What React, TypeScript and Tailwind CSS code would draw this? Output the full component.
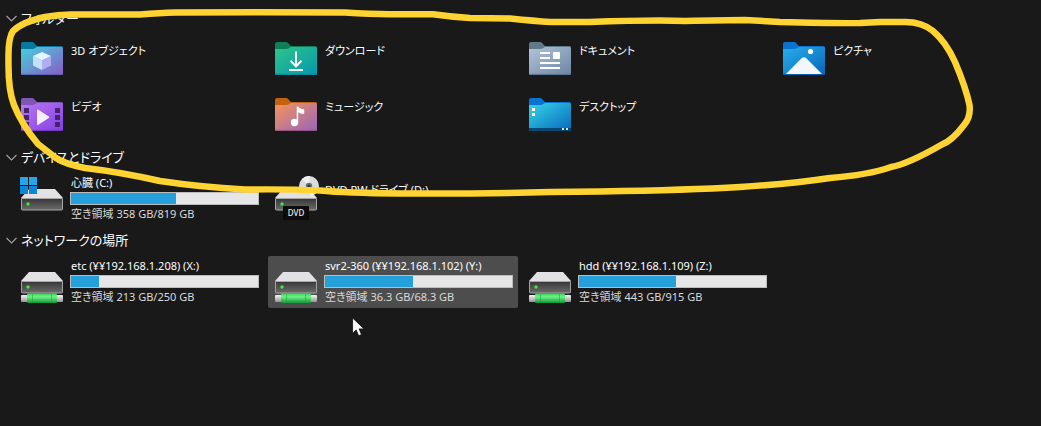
import { useState } from 'react';
import type { ReactNode } from 'react';

type FolderColors = { tab: string; edge: string; from: string; to: string };

function FolderIcon({ id, colors, children }: { id: string; colors: FolderColors; children?: ReactNode }) {
  return (
    <svg width="48" height="48" viewBox="0 0 48 48" aria-hidden="true" className="shrink-0">
      <defs>
        <linearGradient id={id} x1="0" y1="0" x2="1" y2="1">
          <stop offset="0" stopColor={colors.from} />
          <stop offset="1" stopColor={colors.to} />
        </linearGradient>
      </defs>
      <path d="M3 8a2 2 0 0 1 2-2h8.500c1.300 0 2.200.5 3 1.400L19 10h24.500a1.500 1.500 0 0 1 1.500 1.500V20H3z" fill={colors.tab} />
      <path d="M3 13h11.500c1.500 0 2.500-.5 3.500-1.400l.8-.6H43.500a1.500 1.500 0 0 1 1.500 1.500v25a1.500 1.500 0 0 1-1.500 1.500h-39A1.500 1.500 0 0 1 3 37.500z" fill={`url(#${id})`} />
      <path d="M3.500 38.300h41" stroke={colors.edge} strokeWidth="1" />
      {children}
    </svg>
  );
}

function ObjectsIcon() {
  return (
    <FolderIcon id="objects" colors={{ tab: '#0878a0', edge: '#5a63b0', from: '#43d2dc', to: '#8a5bc6' }}>
      <path d="M24 16l9 4-9 4.500-9-4.500z" fill="#e3f5ff" />
      <path d="M15 20l9 4.500V34l-9-4.500z" fill="#c3e2fa" />
      <path d="M33 20l-9 4.500V34l9-4.500z" fill="#b0aef0" />
    </FolderIcon>
  );
}

function DownloadsIcon() {
  return (
    <FolderIcon id="downloads" colors={{ tab: '#0c7f5a', edge: '#07859a', from: '#2fc48a', to: '#0598ad' }}>
      <path d="M24 15.500V30M18.500 24.800L24 30.300l5.500-5.500M17 34h14" fill="none" stroke="#fff" strokeWidth="2" />
    </FolderIcon>
  );
}

function DocumentsIcon() {
  return (
    <FolderIcon id="documents" colors={{ tab: '#5f7a87', edge: '#58718c', from: '#b4c4d9', to: '#6a86a4' }}>
      <path d="M14 17h10M14 22h10M14 27h20M14 32h20" stroke="#fff" strokeWidth="2" />
      <rect x="27" y="16" width="7" height="7" rx="1" fill="#fff" />
    </FolderIcon>
  );
}

function PicturesIcon() {
  return (
    <FolderIcon id="pictures" colors={{ tab: '#0873d0', edge: '#0757a4', from: '#27b0ea', to: '#0a63bb' }}>
      <circle cx="30.500" cy="15.500" r="2.600" fill="#fff" />
      <path d="M6 38l15.300-15.600c1.600-1.600 3.600-1.600 5.200 0L42 38z" fill="#f1f7fd" />
    </FolderIcon>
  );
}

function VideosIcon() {
  return (
    <FolderIcon id="videos" colors={{ tab: '#7e56b5', edge: '#7434bd', from: '#bb77f2', to: '#8341e2' }}>
      <g fill="#44246f">
        <rect x="6" y="16" width="5" height="5" />
        <rect x="6" y="23" width="5" height="5" />
        <rect x="6" y="30" width="5" height="5" />
        <rect x="37" y="16" width="5" height="5" />
        <rect x="37" y="23" width="5" height="5" />
        <rect x="37" y="30" width="5" height="5" />
      </g>
      <path d="M19 18.500c0-.8.700-1.100 1.300-.7l10.500 6.800c.6.400.6 1 0 1.400l-10.500 6.800c-.6.400-1.300.1-1.300-.7z" fill="#f6f0fc" />
    </FolderIcon>
  );
}

function MusicIcon() {
  return (
    <FolderIcon id="music" colors={{ tab: '#c4610f', edge: '#94517f', from: '#f6945a', to: '#9865bb' }}>
      <circle cx="22.500" cy="30.500" r="3.700" fill="#fff" />
      <path d="M24.700 14.500h1.500c.8 2 3.200 2.300 6 3V22c-2.800-.2-4.800-.7-6-2v11h-1.500z" fill="#fff" />
    </FolderIcon>
  );
}

function DesktopIcon() {
  return (
    <FolderIcon id="desktop" colors={{ tab: '#0873d0', edge: '#075797', from: '#36d5e6', to: '#0868bd' }}>
      <path d="M6 16h3v3H6zM6 21h3v3H6z" fill="#fff" />
      <path d="M3 36h42v1.500a1.500 1.500 0 0 1-1.500 1.500h-39A1.500 1.500 0 0 1 3 37.500z" fill="#074774" />
      <path d="M36 36h2v2h-2zM40 36h2v2h-2z" fill="#d4e5f0" />
    </FolderIcon>
  );
}

function DriveIcon({ id, children }: { id: string; children?: ReactNode }) {
  return (
    <svg width="48" height="48" viewBox="0 0 48 48" aria-hidden="true" className="shrink-0">
      <defs>
        <linearGradient id={`${id}-front`} x1="0" y1="0" x2="0" y2="1">
          <stop offset="0" stopColor="#373737" />
          <stop offset="1" stopColor="#6b6b6b" />
        </linearGradient>
        <linearGradient id={`${id}-green`} x1="0" y1="0" x2="0" y2="1">
          <stop offset="0" stopColor="#3fd35b" />
          <stop offset="0.350" stopColor="#6df283" />
          <stop offset="1" stopColor="#14953a" />
        </linearGradient>
        <linearGradient id={`${id}-pipe`} x1="0" y1="0" x2="0" y2="1">
          <stop offset="0" stopColor="#f5f5f5" />
          <stop offset="1" stopColor="#949494" />
        </linearGradient>
      </defs>
      <path d="M11 14h26l8 9H3z" fill="#e2e2e5" />
      <path d="M3.500 23.500h41V34a1 1 0 0 1-1 1h-39a1 1 0 0 1-1-1z" fill={`url(#${id}-front)`} stroke="#a5a5a5" />
      <circle cx="10" cy="29" r="1.700" fill="#3ee83e" />
      {children}
    </svg>
  );
}

function SystemDriveIcon() {
  return (
    <DriveIcon id="system">
      <path d="M2 2h8v8H2zM11 2h8v8h-8z" fill="#25a6ea" />
      <path d="M2 11h8v8H2zM11 11h8v8h-8z" fill="#0b85d8" />
    </DriveIcon>
  );
}

function DvdDriveIcon() {
  return (
    <DriveIcon id="dvd">
      <circle cx="37" cy="11" r="10" fill="#dadcdc" />
      <path d="M37 11L30 4a10 10 0 0 1 8-3zM37 11l8 6a10 10 0 0 1-7 4z" fill="#eef0f0" />
      <circle cx="37" cy="11" r="3.200" fill="#6c7376" />
      <circle cx="37" cy="11" r="1.500" fill="#33393b" />
      <rect x="11" y="31" width="26" height="14" rx="1" fill="#0c0c0c" />
      <text x="24" y="41" textAnchor="middle" fontSize="8" fontWeight="500" fill="#f0f0f0">
        DVD
      </text>
    </DriveIcon>
  );
}

function NetworkDriveIcon({ id }: { id: string }) {
  return (
    <DriveIcon id={id}>
      <rect x="3" y="37" width="42" height="7" rx="1" fill={`url(#${id}-pipe)`} />
      <rect x="9" y="35.500" width="30" height="9.500" rx="1" fill={`url(#${id}-green)`} />
      <path d="M14.500 36v9M33.500 36v9" stroke="#1b9c3c" strokeOpacity="0.500" />
    </DriveIcon>
  );
}

const folders = [
  { name: '3D オブジェクト', icon: <ObjectsIcon /> },
  { name: 'ダウンロード', icon: <DownloadsIcon /> },
  { name: 'ドキュメント', icon: <DocumentsIcon /> },
  { name: 'ピクチャ', icon: <PicturesIcon /> },
  { name: 'ビデオ', icon: <VideosIcon /> },
  { name: 'ミュージック', icon: <MusicIcon /> },
  { name: 'デスクトップ', icon: <DesktopIcon /> },
];

const networkDrives = [
  { name: 'etc (¥¥192.168.1.208) (X:)', free: '空き領域 213 GB/250 GB', used: 15, icon: <NetworkDriveIcon id="net-x" /> },
  { name: 'svr2-360 (¥¥192.168.1.102) (Y:)', free: '空き領域 36.3 GB/68.3 GB', used: 47, icon: <NetworkDriveIcon id="net-y" />, active: true },
  { name: 'hdd (¥¥192.168.1.109) (Z:)', free: '空き領域 443 GB/915 GB', used: 52, icon: <NetworkDriveIcon id="net-z" /> },
];

function Section({ title, children }: { title: string; children: ReactNode }) {
  const [open, setOpen] = useState(true);
  return (
    <section>
      <h2>
        <button
          type="button"
          aria-expanded={open}
          onClick={() => setOpen(!open)}
          className="flex h-[31px] items-center gap-1 pl-1.5 text-[13px]"
        >
          <svg width="11" height="11" viewBox="0 0 11 11" aria-hidden="true" className={open ? '' : '-rotate-90'}>
            <path d="M.5 3l5 5 5-5" fill="none" stroke="#a0a0a0" strokeWidth="1.200" />
          </svg>
          {title}
        </button>
      </h2>
      {open && <div className="grid grid-cols-[repeat(auto-fill,250px)] gap-1 pl-3.5">{children}</div>}
    </section>
  );
}

function Tile({ name, icon }: { name: string; icon: ReactNode }) {
  return (
    <a href="#" className="flex h-[52px] gap-[5px] rounded-xs px-1 py-0.5 hover:bg-[#4d4d4d]">
      {icon}
      <span className="pt-[7px] leading-4">{name}</span>
    </a>
  );
}

type DriveProps = { name: string; free: string; used: number; icon: ReactNode; active?: boolean };

function DriveTile({ name, free, used, icon, active }: DriveProps) {
  return (
    <a
      href="#"
      className={`flex h-[52px] gap-1 rounded-xs py-0.5 pr-[5px] pl-1 hover:bg-[#4d4d4d] ${active ? 'bg-[#4d4d4d]' : ''}`}
    >
      {icon}
      <span className="flex min-w-0 flex-1 flex-col leading-4 whitespace-nowrap">
        <span className="pl-px">{name}</span>
        <span className="mt-px block h-[13px] border border-[#bcbcbc] bg-[#e6e6e6]">
          <span className="block h-full bg-[#26a0da]" style={{ width: `${used}%` }} />
        </span>
        <span className="mt-px pl-px text-[#dadada]">{free}</span>
      </span>
    </a>
  );
}

export default function App() {
  return (
    <main className="relative min-h-screen overflow-hidden bg-[#191919] pt-[3px] font-['Noto_Sans','Noto_Sans_CJK_JP',sans-serif] text-[11px] text-white [font-feature-settings:'palt']">
      <Section title="フォルダー">
        {folders.map((folder) => (
          <Tile key={folder.name} {...folder} />
        ))}
      </Section>
      <Section title="デバイスとドライブ">
        <DriveTile name="心臓 (C:)" free="空き領域 358 GB/819 GB" used={56} icon={<SystemDriveIcon />} />
        <Tile name="DVD RW ドライブ (D:)" icon={<DvdDriveIcon />} />
      </Section>
      <Section title="ネットワークの場所">
        {networkDrives.map((drive) => (
          <DriveTile key={drive.name} {...drive} />
        ))}
      </Section>

      {/* hand-drawn marker around the folders */}
      <svg width="1041" height="426" viewBox="0 0 1041 426" aria-hidden="true" className="pointer-events-none absolute top-0 left-0">
        <path
          d="M75 14.500L140 14.500Q160 13 175 12.500L260 12.300L345 12.500Q370 14 390 14.300L433 14.300Q452 17 470 18L510 18.500Q535 21 550 22L590 22Q630 20.500 660 20.500L685 21Q725 20 745 20L780 22Q840 23.500 860 23L880 22L905 22Q922 22 933 31Q946 42 955 62Q966 88 969.500 105Q971 117 964 125Q952 141 941 145Q908 164 891 167Q868 175 830 178Q790 184 740 187Q690 190 600 191.500L550 192Q480 194 400 193.500Q345 193 320 190.500Q290 189 245 189.500Q200 187 160 181Q120 172 85 168Q65 164 56 158L38 144Q22 125 14 105Q8 90 8.500 60Q8 38 13 31Q22 22 45 17Q60 14 75 14.500Z"
          fill="none"
          stroke="#ffd331"
          strokeWidth="6.500"
          strokeLinejoin="round"
        />
      </svg>
      <svg width="13" height="20" viewBox="0 0 13 20" aria-hidden="true" className="pointer-events-none absolute top-[317px] left-[352px]">
        <path d="M.6 1v15.300l3.600-3.400 2.400 5.800 2.900-1.200-2.400-5.600h5z" fill="#fff" stroke="#111" strokeWidth="0.800" />
      </svg>
    </main>
  );
}
